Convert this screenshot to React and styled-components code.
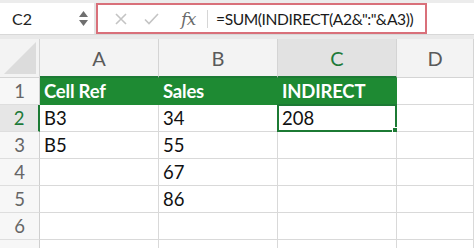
import React from "react";
import styled, { createGlobalStyle } from "styled-components";

const Global = createGlobalStyle`
  html, body { margin: 0; padding: 0; background: #ffffff; }
  body { font-family: Lato, "Liberation Sans", sans-serif; width: 474px; height: 248px; overflow: hidden; }
`;

const Page = styled.div`
  width: 474px;
  height: 248px;
  display: flex;
  flex-direction: column;
  background: #ffffff;
  overflow: hidden;
`;

const TopStrip = styled.div`
  height: 3px;
  background: #ececec;
  flex: none;
`;

const FormulaRow = styled.div`
  height: 31px;
  display: flex;
  align-items: stretch;
  background: #ffffff;
  flex: none;
`;

const NameBox = styled.div`
  width: 96px;
  display: flex;
  align-items: center;
  justify-content: space-between;
  padding: 0 6px 0 12px;
  box-sizing: border-box;
  font-size: 16px;
  color: #222;
  border-right: 2px solid #e4e4e4;
`;

const Spinner = styled.div`
  display: flex;
  flex-direction: column;
  gap: 3px;
  align-items: center;
`;

const FormulaBox = styled.div`
  width: 331px;
  border: 2px solid #d9707a;
  box-sizing: border-box;
  display: flex;
  align-items: center;
  padding-left: 16px;
`;

const IconSlot = styled.div`
  width: ${(p) => p.$w}px;
  display: flex;
  align-items: center;
  justify-content: center;
  flex: none;
`;

const Fx = styled.span`
  font-family: "DejaVu Serif", "Liberation Serif", serif;
  font-style: italic;
  font-size: 17px;
  color: #6a6a6a;
  letter-spacing: -0.5px;
`;

const Divider = styled.div`
  width: 1px;
  height: 18px;
  background: #d6d6d6;
  margin: 0 8px 0 5px;
`;

const FormulaText = styled.span`
  font-size: 15.6px;
  letter-spacing: -0.4px;
  color: #1a1a1a;
  white-space: nowrap;
`;

const Separator = styled.div`
  height: 4px;
  background: #e9e9e9;
  border-top: 1px solid #d8d8d8;
  flex: none;
`;

const Grid = styled.div`
  display: grid;
  grid-template-columns: 40px 119px 119px 119px 1fr;
  grid-template-rows: 39px repeat(7, 27px);
`;

const Corner = styled.div`
  position: relative;
  background: #f3f3f3;
  border-right: 1px solid #d4d4d4;
  border-bottom: 1px solid #d4d4d4;
  overflow: hidden;
`;

const CornerTriangle = styled.svg`
  position: absolute;
  right: 3px;
  bottom: 3px;
`;

const ColHead = styled.div`
  display: flex;
  align-items: center;
  justify-content: center;
  font-size: 20px;
  color: ${(p) => (p.$active ? "#1d7a3a" : "#5a5a5a")};
  background: ${(p) => (p.$active ? "#e2e2e2" : "#f3f3f3")};
  border-right: 1px solid #d4d4d4;
  border-bottom: ${(p) => (p.$line ? "2px solid #1c7a34" : "1px solid #d4d4d4")};
  box-sizing: border-box;
`;

const RowHead = styled.div`
  display: flex;
  align-items: center;
  justify-content: center;
  font-size: 18.5px;
  color: ${(p) => (p.$active ? "#1d7a3a" : "#666")};
  background: ${(p) => (p.$active ? "#e6e6e6" : "#f7f7f7")};
  border-right: ${(p) => (p.$active ? "2px solid #1c7a34" : "1px solid #cfcfcf")};
  border-bottom: 1px solid #dedede;
  box-sizing: border-box;
`;

const Cell = styled.div`
  position: relative;
  display: flex;
  align-items: center;
  padding-left: 4px;
  font-size: 18.5px;
  letter-spacing: ${(p) => (p.$head ? "-0.2px" : "0")};
  font-weight: ${(p) => (p.$head ? 700 : 400)};
  color: ${(p) => (p.$head ? "#ffffff" : "#111")};
  background: ${(p) => (p.$head ? "#1e8a33" : "#ffffff")};
  border-right: 1px solid ${(p) => (p.$head ? "#1e8a33" : "#d9d9d9")};
  border-bottom: 1px solid ${(p) => (p.$head ? "#1e8a33" : "#d9d9d9")};
  box-sizing: border-box;
  white-space: nowrap;
`;

const Selection = styled.div`
  position: absolute;
  left: -1px;
  top: -1px;
  right: -1px;
  bottom: -1px;
  border: 2px solid #1c7a34;
  pointer-events: none;
`;

const Handle = styled.div`
  position: absolute;
  right: -4px;
  bottom: -4px;
  width: 5px;
  height: 5px;
  background: #1c7a34;
  border: 1px solid #fff;
`;

const cols = ["A", "B", "C", "D"];
const rows = [
  ["Cell Ref", "Sales", "INDIRECT", ""],
  ["B3", "34", "208", ""],
  ["B5", "55", "", ""],
  ["", "67", "", ""],
  ["", "86", "", ""],
  ["", "", "", ""],
  ["", "", "", ""],
];

export default function App() {
  return (
    <Page>
      <Global />
      <TopStrip />
      <FormulaRow>
        <NameBox>
          <span>C2</span>
          <Spinner>
            <svg width="9" height="6" viewBox="0 0 9 6"><path d="M4.5 0L9 6H0z" fill="#6f6f6f" /></svg>
            <svg width="9" height="6" viewBox="0 0 9 6"><path d="M0 0h9L4.5 6z" fill="#6f6f6f" /></svg>
          </Spinner>
        </NameBox>
        <FormulaBox>
          <IconSlot $w={14}>
            <svg width="12" height="12" viewBox="0 0 12 12">
              <path d="M1 1L11 11M11 1L1 11" stroke="#c4c4c4" strokeWidth="1.6" fill="none" />
            </svg>
          </IconSlot>
          <IconSlot $w={47}>
            <svg width="15" height="12" viewBox="0 0 15 12">
              <path d="M1 6.5L5 10.5L14 1" stroke="#c4c4c4" strokeWidth="1.6" fill="none" />
            </svg>
          </IconSlot>
          <IconSlot $w={27}>
            <Fx>fx</Fx>
          </IconSlot>
          <Divider />
          <FormulaText>=SUM(INDIRECT(A2&amp;":"&amp;A3))</FormulaText>
        </FormulaBox>
      </FormulaRow>
      <Separator />
      <Grid>
        <Corner>
          <CornerTriangle width="32" height="32" viewBox="0 0 32 32">
            <path d="M32 0V32H0z" fill="#dcdcdc" />
          </CornerTriangle>
        </Corner>
        {cols.map((c, i) => (
          <ColHead key={c} $active={c === "C"} $line={i < 3}>
            {c}
          </ColHead>
        ))}
        {rows.map((r, ri) => (
          <React.Fragment key={ri}>
            <RowHead $active={ri === 1}>{ri < 6 ? ri + 1 : ""}</RowHead>
            {r.map((v, ci) => (
              <Cell key={ci} $head={ri === 0 && ci < 3}>
                {v}
                {ri === 1 && ci === 2 && (
                  <Selection>
                    <Handle />
                  </Selection>
                )}
              </Cell>
            ))}
          </React.Fragment>
        ))}
      </Grid>
    </Page>
  );
}
